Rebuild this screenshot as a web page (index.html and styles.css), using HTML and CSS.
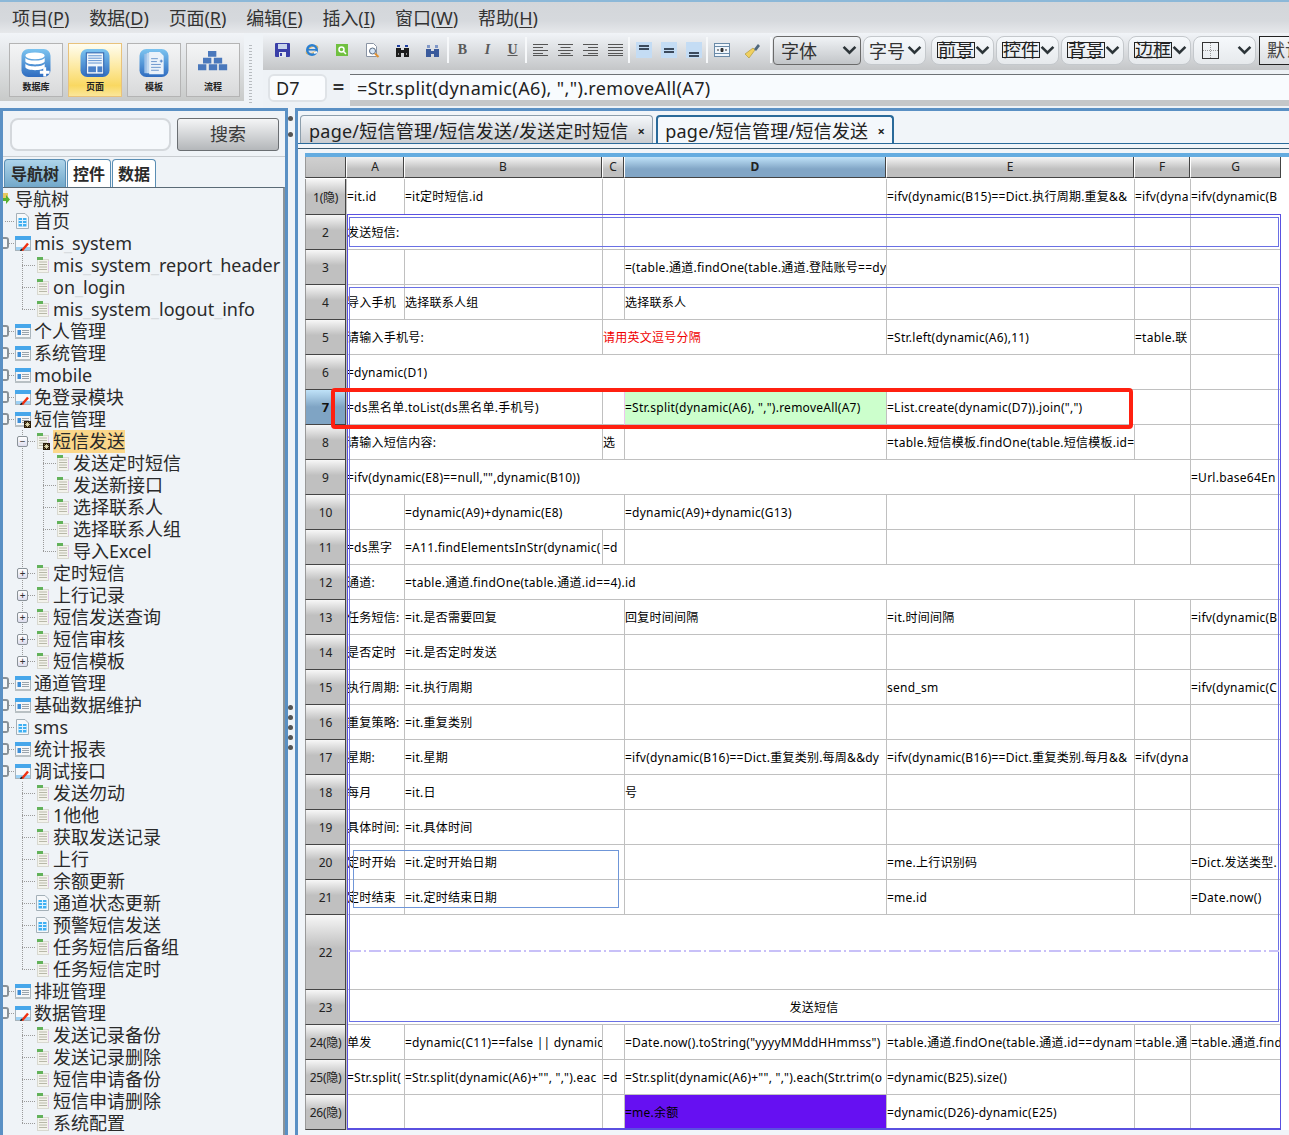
FILE: index.html
```html
<!DOCTYPE html>
<html lang="zh">
<head>
<meta charset="utf-8">
<title>页面设计</title>
<link rel="stylesheet" href="styles.css">
</head>
<body>
<svg class="defs" width="0" height="0" aria-hidden="true">
  <symbol id="page" viewBox="0 0 14 16">
    <rect x="1.5" y="2.5" width="11" height="13" fill="#f3f3ec" stroke="#d8d8d0"/>
    <rect x="1" y="0" width="6" height="3" fill="#62b25a"/>
    <path d="M3 5h8M3 7.5h8M3 10h8M3 12.5h8" stroke="#b8b8a8"/>
    <rect x="12" y="4" width="1" height="10" fill="#e0c8e8"/>
  </symbol>
  <symbol id="win" viewBox="0 0 16 15">
    <rect x=".5" y=".5" width="15" height="14" fill="#f4f6f8" stroke="#a8b4bc"/>
    <rect x="0" y="0" width="16" height="4" fill="#46a6ea"/>
    <rect x="2.5" y="6" width="3.5" height="5" fill="#3c8ed8"/>
    <path d="M7 6.5h7M7 8.5h7M7 10.5h7" stroke="#9aa4ac"/>
    <rect x="0" y="13" width="16" height="2" fill="#b8c0c4"/>
  </symbol>
  <symbol id="edit" viewBox="0 0 16 15">
    <rect x=".5" y=".5" width="15" height="14" fill="#f4f8fc" stroke="#a8b4bc"/>
    <rect x="0" y="0" width="16" height="4" fill="#46a6ea"/>
    <rect x="1" y="11" width="14" height="3" fill="#9cd0f4"/>
    <path d="M7 14.5L13 7.5" stroke="#f03010" stroke-width="2.4"/>
    <path d="M5.5 15L7 13" stroke="#202020" stroke-width="1.6"/>
  </symbol>
  <symbol id="calc" viewBox="0 0 13 16">
    <path d="M.5.5h8.500l3.500 3.500v11.500H.5z" fill="#f6f8fa" stroke="#a4b0b8"/>
    <path d="M2.500 5h8v8.500h-8z" fill="#3fb0f2"/>
    <path d="M2.500 7.500h8M2.500 10.500h8M6.500 5v8.500" stroke="#dff2ff"/>
  </symbol>
  <symbol id="star" viewBox="0 0 7 7">
    <rect width="7" height="7" fill="#2a1c08"/>
    <path d="M3.500 1v5M1 3.500h5M1.600 1.600l3.800 3.800M5.400 1.600L1.600 5.400" stroke="#f6f0c0" stroke-width=".8"/>
  </symbol>
  <symbol id="chev" viewBox="0 0 14 9">
    <path d="M1.500 1.500L7 7l5.500-5.500" fill="none" stroke="#2c3438" stroke-width="2.400"/>
  </symbol>
  <symbol id="al" viewBox="0 0 15 12">
    <path d="M0 .5h15M0 3.500h10M0 6.500h15M0 9.500h10M0 11.500h15" stroke="#555" fill="none"/>
  </symbol>
  <symbol id="ac" viewBox="0 0 15 12">
    <path d="M0 .5h15M2.500 3.500h10M0 6.500h15M2.500 9.500h10M0 11.500h15" stroke="#555" fill="none"/>
  </symbol>
  <symbol id="ar" viewBox="0 0 15 12">
    <path d="M0 .5h15M5 3.500h10M0 6.500h15M5 9.500h10M0 11.500h15" stroke="#555" fill="none"/>
  </symbol>
  <symbol id="aj" viewBox="0 0 15 12">
    <path d="M0 .5h15M0 3.500h15M0 6.500h15M0 9.500h15M0 11.500h15" stroke="#555" fill="none"/>
  </symbol>
</svg>

<header class="menubar">
  <span class="menu">项目(<u>P</u>)</span>
  <span class="menu">数据(<u>D</u>)</span>
  <span class="menu">页面(<u>R</u>)</span>
  <span class="menu">编辑(<u>E</u>)</span>
  <span class="menu">插入(<u>I</u>)</span>
  <span class="menu">窗口(<u>W</u>)</span>
  <span class="menu">帮助(<u>H</u>)</span>
</header>

<section class="tools">
  <div class="ribbon">
    <div class="rbtn">
      <svg class="ricon" viewBox="0 0 30 30">
        <defs><linearGradient id="bl" x1="0" y1="0" x2="0" y2="1"><stop offset="0" stop-color="#7cc4f0"/><stop offset="1" stop-color="#2f6cc0"/></linearGradient></defs>
        <rect width="30" height="29" rx="7" fill="url(#bl)"/>
        <ellipse cx="14" cy="7" rx="10" ry="3.500" fill="#fff"/>
        <path d="M4 9c2 4 18 4 20 0v4c-2 4-18 4-20 0zM4 15c2 4 18 4 20 0v4c-2 4-18 4-20 0z" fill="#fff"/>
        <path d="M22.500 19h3v3.500h3.500v3h-3.500v3h-3v-3H19v-3h3.500z" fill="#fff"/>
      </svg>
      <span class="rlabel">数据库</span>
    </div>
    <div class="rbtn on">
      <svg class="ricon" viewBox="0 0 30 30">
        <rect width="30" height="29" rx="7" fill="url(#bl)"/>
        <rect x="6" y="4" width="18" height="22" fill="#f0f6fc" stroke="#2a5ca8"/>
        <path d="M8 7h14M8 9.500h14M8 12h14M8 14.500h14" stroke="#5c90d0"/>
        <rect x="8" y="18" width="8" height="6" fill="#4a80c8"/>
        <rect x="17.500" y="18" width="5" height="6" fill="#4a80c8"/>
      </svg>
      <span class="rlabel">页面</span>
    </div>
    <div class="rbtn">
      <svg class="ricon" viewBox="0 0 30 30">
        <rect width="30" height="29" rx="7" fill="url(#bl)"/>
        <rect x="5" y="5" width="14" height="20" fill="#9cc0e8"/>
        <rect x="7.500" y="4" width="14" height="21" fill="#c0d8f0"/>
        <path d="M10 3h11l4 4v19H10z" fill="#eaf2fa"/>
        <path d="M12 10h7M12 13h6M12 16h10M12 19h10M12 22h8" stroke="#6c96cc"/>
        <path d="M21 12.500h3M22.500 11v3" stroke="#4a80c8"/>
      </svg>
      <span class="rlabel">模板</span>
    </div>
    <div class="rbtn">
      <svg class="ricon" viewBox="0 0 36 30">
        <path d="M12 0h10v7H12zM6 8h10v7H6zM19 8h10v7H19zM0 16h10v7H0zM13 16h10v7H13zM25 16h10v7H25z" fill="#4a78bc"/>
      </svg>
      <span class="rlabel">流程</span>
    </div>
  </div>
  <div class="grip"></div>
  <div class="barcol">
    <div class="toolbar">
      <span class="ic w30"><svg width="15" height="14" viewBox="0 0 15 14"><rect width="15" height="14" rx="1" fill="#3a3fa8"/><rect x="3" y="1" width="9" height="5" fill="#c8d4ec"/><rect x="4" y="9" width="7" height="5" fill="#e4e8f0"/><rect x="5" y="10" width="2" height="3" fill="#3a3fa8"/></svg></span>
      <span class="ic w30"><svg width="14" height="14" viewBox="0 0 14 14"><ellipse cx="7" cy="7" rx="6.500" ry="3" fill="none" stroke="#e8b040" transform="rotate(-30 7 7)"/><circle cx="7" cy="7" r="4.800" fill="none" stroke="#2b7fd0" stroke-width="2.400"/><path d="M3 6.800h8" stroke="#2b7fd0" stroke-width="1.600"/><path d="M9 10l3-1" stroke="#f4f6f8" stroke-width="2"/></svg></span>
      <span class="ic w30"><svg width="12" height="12" viewBox="0 0 12 12"><rect width="12" height="12" fill="#70c040"/><circle cx="5.500" cy="5.500" r="2.500" fill="none" stroke="#fff" stroke-width="1.500"/><path d="M7.500 7.500L10 10" stroke="#fff" stroke-width="1.500"/></svg></span>
      <span class="ic w30"><svg width="15" height="15" viewBox="0 0 15 15"><path d="M1.500.5h7l3 3v10h-10z" fill="#fff" stroke="#8a94a4"/><circle cx="7.500" cy="8" r="3" fill="#d8e8f8" stroke="#5a6a80"/><path d="M10 10.500l3.500 3.500" stroke="#e09030" stroke-width="2"/></svg></span>
      <span class="ic w30"><svg width="15" height="15" viewBox="0 0 15 15"><path d="M1 5h5v9H1zM9 5h5v9H9zM6 7h3v3H6z" fill="#1c1c1c"/><path d="M2 2h3v2H2zM10 2h3v2h-3z" fill="#2040a0"/><path d="M3 11h1M11 11h1" stroke="#fff"/></svg></span>
      <span class="ic w30"><svg width="15" height="15" viewBox="0 0 15 15"><path d="M1 6h5v8H1zM9 6h5v8H9zM6 8h3v3H6z" fill="#3a5a9c"/><path d="M2 2h3v3H2zM10 2h3v3h-3z" fill="#8098c8"/></svg></span>
      <span class="sep"></span>
      <span class="ic w25 fmt b">B</span>
      <span class="ic w25 fmt i">I</span>
      <span class="ic w25 fmt ul">U</span>
      <span class="sep"></span>
      <span class="ic w25"><svg width="15" height="12"><use href="#al"/></svg></span>
      <span class="ic w25"><svg width="15" height="12"><use href="#ac"/></svg></span>
      <span class="ic w25"><svg width="15" height="12"><use href="#ar"/></svg></span>
      <span class="ic w25"><svg width="15" height="12"><use href="#aj"/></svg></span>
      <span class="sep"></span>
      <span class="ic w25"><svg width="16" height="16" viewBox="0 0 16 16"><rect width="16" height="16" fill="#c4dcf4"/><path d="M3 3h10v2H3zM3 6h10v2H3z" fill="#3c4a5c"/></svg></span>
      <span class="ic w25"><svg width="16" height="16" viewBox="0 0 16 16"><rect width="16" height="16" fill="#c4dcf4"/><path d="M3 6h10v2H3zM3 9h10v2H3z" fill="#3c4a5c"/></svg></span>
      <span class="ic w25"><svg width="16" height="16" viewBox="0 0 16 16"><rect width="16" height="16" fill="#c4dcf4"/><path d="M3 10h10v2H3zM3 13h10v2H3z" fill="#3c4a5c"/></svg></span>
      <span class="sep"></span>
      <span class="ic w25"><svg width="16" height="14" viewBox="0 0 16 14"><rect x=".5" y=".5" width="15" height="13" fill="#f0f6fc" stroke="#6a8aa8"/><path d="M1 3.500h14M1 10.500h14" stroke="#6a8aa8"/><path d="M3 7h2M11 7h2M7 5.500h2v3H7z" fill="#333" stroke="#333"/></svg></span>
      <span class="ic w25 gap5"><svg width="17" height="15" viewBox="0 0 17 15"><path d="M10 5l-8 6 4 4 6-8z" fill="#f0d060" stroke="#a89030" stroke-width=".6"/><path d="M11 6l4-5 2 2-4 5z" fill="#50687c"/></svg></span>
      <span class="sep sep4"></span>
      <div class="sel dark w88"><span>字体</span><svg class="chev" width="15" height="10"><use href="#chev"/></svg></div>
      <div class="sel w63"><span>字号</span><svg class="chev" width="15" height="10"><use href="#chev"/></svg></div>
      <div class="sel w63 m5"><span class="swatch">前景</span><svg class="chev" width="15" height="10"><use href="#chev"/></svg></div>
      <div class="sel w63"><span class="swatch">控件</span><svg class="chev" width="15" height="10"><use href="#chev"/></svg></div>
      <div class="sel w63"><span class="swatch">背景</span><svg class="chev" width="15" height="10"><use href="#chev"/></svg></div>
      <div class="sel w63 m4"><span class="swatch">边框</span><svg class="chev" width="15" height="10"><use href="#chev"/></svg></div>
      <div class="sel w63"><span class="cellbox"></span><svg class="chev" width="15" height="10"><use href="#chev"/></svg></div>
      <div class="deflt">默认</div>
    </div>
    <div class="formula">
      <div class="cellref">D7</div>
      <div class="eq">=</div>
      <div class="finput">=Str.split(dynamic(A6), ",").removeAll(A7)</div>
    </div>
  </div>
</section>

<main class="main">
  <aside class="left">
    <div class="searchrow">
      <div class="search"></div>
      <div class="sbtn">搜索</div>
    </div>
    <div class="ltabs">
      <span class="ltab on">导航树</span>
      <span class="ltab">控件</span>
      <span class="ltab">数据</span>
    </div>
    <nav class="tree">
      <div class="row l0"><svg class="rooticon" width="7" height="14" viewBox="0 0 7 14"><rect y="1" width="5" height="6" fill="#e8c860"/><path d="M0 6h3V3l4 4.500L3 12V9H0z" fill="#58b030"/></svg><span class="label">导航树</span></div>
      <div class="row l1n"><span class="conn c10"></span><svg class="tico calc" width="13" height="16"><use href="#calc"/></svg><span class="label">首页</span></div>
      <div class="row l1"><span class="bx"></span><span class="conn c6"></span><svg class="tico" width="16" height="15"><use href="#edit"/></svg><span class="label">mis<i>_</i>system</span></div>
      <div class="row l2n v22"><span class="conn c14"></span><svg class="pico" width="14" height="16"><use href="#page"/></svg><span class="label">mis<i>_</i>system<i>_</i>report<i>_</i>header</span></div>
      <div class="row l2n v22"><span class="conn c14"></span><svg class="pico" width="14" height="16"><use href="#page"/></svg><span class="label">on<i>_</i>login</span></div>
      <div class="row l2n e22"><span class="conn c14"></span><svg class="pico" width="14" height="16"><use href="#page"/></svg><span class="label">mis<i>_</i>system<i>_</i>logout<i>_</i>info</span></div>
      <div class="row l1"><span class="bx"></span><span class="conn c6"></span><svg class="tico" width="16" height="15"><use href="#win"/></svg><span class="label">个人管理</span></div>
      <div class="row l1"><span class="bx"></span><span class="conn c6"></span><svg class="tico" width="16" height="15"><use href="#win"/></svg><span class="label">系统管理</span></div>
      <div class="row l1"><span class="bx"></span><span class="conn c6"></span><svg class="tico" width="16" height="15"><use href="#win"/></svg><span class="label">mobile</span></div>
      <div class="row l1"><span class="bx"></span><span class="conn c6"></span><svg class="tico" width="16" height="15"><use href="#edit"/></svg><span class="label">免登录模块</span></div>
      <div class="row l1"><span class="bx"></span><span class="conn c6"></span><span class="badged"><svg class="tico" width="16" height="15"><use href="#win"/></svg><svg class="badge" width="7" height="7"><use href="#star"/></svg></span><span class="label">短信管理</span></div>
      <div class="row l2b v22"><span class="bx2">−</span><span class="conn c8"></span><span class="badged"><svg class="pico" width="14" height="16"><use href="#page"/></svg><svg class="badge" width="7" height="7"><use href="#star"/></svg></span><span class="label sel-item">短信发送</span></div>
      <div class="row l3 v22 v43"><span class="conn c13"></span><svg class="pico" width="14" height="16"><use href="#page"/></svg><span class="label">发送定时短信</span></div>
      <div class="row l3 v22 v43"><span class="conn c13"></span><svg class="pico" width="14" height="16"><use href="#page"/></svg><span class="label">发送新接口</span></div>
      <div class="row l3 v22 v43"><span class="conn c13"></span><svg class="pico" width="14" height="16"><use href="#page"/></svg><span class="label">选择联系人</span></div>
      <div class="row l3 v22 v43"><span class="conn c13"></span><svg class="pico" width="14" height="16"><use href="#page"/></svg><span class="label">选择联系人组</span></div>
      <div class="row l3 v22 e43"><span class="conn c13"></span><svg class="pico" width="14" height="16"><use href="#page"/></svg><span class="label">导入Excel</span></div>
      <div class="row l2b v22"><span class="bx2">+</span><span class="conn c8"></span><svg class="pico" width="14" height="16"><use href="#page"/></svg><span class="label">定时短信</span></div>
      <div class="row l2b v22"><span class="bx2">+</span><span class="conn c8"></span><svg class="pico" width="14" height="16"><use href="#page"/></svg><span class="label">上行记录</span></div>
      <div class="row l2b v22"><span class="bx2">+</span><span class="conn c8"></span><svg class="pico" width="14" height="16"><use href="#page"/></svg><span class="label">短信发送查询</span></div>
      <div class="row l2b v22"><span class="bx2">+</span><span class="conn c8"></span><svg class="pico" width="14" height="16"><use href="#page"/></svg><span class="label">短信审核</span></div>
      <div class="row l2b e22"><span class="bx2">+</span><span class="conn c8"></span><svg class="pico" width="14" height="16"><use href="#page"/></svg><span class="label">短信模板</span></div>
      <div class="row l1"><span class="bx"></span><span class="conn c6"></span><svg class="tico" width="16" height="15"><use href="#win"/></svg><span class="label">通道管理</span></div>
      <div class="row l1"><span class="bx"></span><span class="conn c6"></span><svg class="tico" width="16" height="15"><use href="#win"/></svg><span class="label">基础数据维护</span></div>
      <div class="row l1"><span class="bx"></span><span class="conn c6"></span><svg class="tico calc" width="13" height="16"><use href="#calc"/></svg><span class="label">sms</span></div>
      <div class="row l1"><span class="bx"></span><span class="conn c6"></span><svg class="tico" width="16" height="15"><use href="#win"/></svg><span class="label">统计报表</span></div>
      <div class="row l1"><span class="bx"></span><span class="conn c6"></span><svg class="tico" width="16" height="15"><use href="#edit"/></svg><span class="label">调试接口</span></div>
      <div class="row l2n v22"><span class="conn c14"></span><svg class="pico" width="14" height="16"><use href="#page"/></svg><span class="label">发送勿动</span></div>
      <div class="row l2n v22"><span class="conn c14"></span><svg class="pico" width="14" height="16"><use href="#page"/></svg><span class="label">1他他</span></div>
      <div class="row l2n v22"><span class="conn c14"></span><svg class="pico" width="14" height="16"><use href="#page"/></svg><span class="label">获取发送记录</span></div>
      <div class="row l2n v22"><span class="conn c14"></span><svg class="pico" width="14" height="16"><use href="#page"/></svg><span class="label">上行</span></div>
      <div class="row l2n v22"><span class="conn c14"></span><svg class="pico" width="14" height="16"><use href="#page"/></svg><span class="label">余额更新</span></div>
      <div class="row l2n v22"><span class="conn c14"></span><svg class="pico calc2" width="13" height="16"><use href="#calc"/></svg><span class="label">通道状态更新</span></div>
      <div class="row l2n v22"><span class="conn c14"></span><svg class="pico calc2" width="13" height="16"><use href="#calc"/></svg><span class="label">预警短信发送</span></div>
      <div class="row l2n v22"><span class="conn c14"></span><svg class="pico" width="14" height="16"><use href="#page"/></svg><span class="label">任务短信后备组</span></div>
      <div class="row l2n e22"><span class="conn c14"></span><svg class="pico" width="14" height="16"><use href="#page"/></svg><span class="label">任务短信定时</span></div>
      <div class="row l1"><span class="bx"></span><span class="conn c6"></span><svg class="tico" width="16" height="15"><use href="#win"/></svg><span class="label">排班管理</span></div>
      <div class="row l1"><span class="bx"></span><span class="conn c6"></span><svg class="tico" width="16" height="15"><use href="#edit"/></svg><span class="label">数据管理</span></div>
      <div class="row l2n v22"><span class="conn c14"></span><svg class="pico" width="14" height="16"><use href="#page"/></svg><span class="label">发送记录备份</span></div>
      <div class="row l2n v22"><span class="conn c14"></span><svg class="pico" width="14" height="16"><use href="#page"/></svg><span class="label">发送记录删除</span></div>
      <div class="row l2n v22"><span class="conn c14"></span><svg class="pico" width="14" height="16"><use href="#page"/></svg><span class="label">短信申请备份</span></div>
      <div class="row l2n v22"><span class="conn c14"></span><svg class="pico" width="14" height="16"><use href="#page"/></svg><span class="label">短信申请删除</span></div>
      <div class="row l2n e22"><span class="conn c14"></span><svg class="pico" width="14" height="16"><use href="#page"/></svg><span class="label">系统配置</span></div>
    </nav>
  </aside>

  <div class="splitter">
    <div class="dots top"><b></b><b></b></div>
    <div class="dots"><b></b><b></b><b></b><b></b><b></b></div>
  </div>

  <section class="right">
    <div class="tabs">
      <div class="tab">page/短信管理/短信发送/发送定时短信<span class="x">×</span></div>
      <div class="tab on">page/短信管理/短信发送<span class="x">×</span></div>
    </div>
    <div class="sheetwrap">
      <div class="sheet">
        <div class="corner hd"></div><div class="hd">A</div><div class="hd">B</div><div class="hd">C</div><div class="hd act">D</div><div class="hd">E</div><div class="hd">F</div><div class="hd">G</div>

        <div class="rh sm">1(隐)</div><div class="c">=it.id</div><div class="c">=it定时短信.id</div><div class="c"></div><div class="c"></div><div class="c">=ifv(dynamic(B15)==Dict.执行周期.重复&amp;&amp;</div><div class="c">=ifv(dyna</div><div class="c">=ifv(dynamic(B</div>

        <div class="rh">2</div><div class="c s2">发送短信:</div><div class="c"></div><div class="c"></div><div class="c"></div><div class="c"></div><div class="c"></div>

        <div class="rh">3</div><div class="c"></div><div class="c"></div><div class="c"></div><div class="c">=(table.通道.findOne(table.通道.登陆账号==dy</div><div class="c"></div><div class="c"></div><div class="c"></div>

        <div class="rh">4</div><div class="c">导入手机</div><div class="c">选择联系人组</div><div class="c"></div><div class="c">选择联系人</div><div class="c"></div><div class="c"></div><div class="c"></div>

        <div class="rh">5</div><div class="c s2">请输入手机号:</div><div class="c s2 red">请用英文逗号分隔</div><div class="c">=Str.left(dynamic(A6),11)</div><div class="c">=table.联</div><div class="c"></div>

        <div class="rh">6</div><div class="c s6">=dynamic(D1)</div><div class="c"></div>

        <div class="rh act">7</div><div class="c s2">=ds黑名单.toList(ds黑名单.手机号)</div><div class="c"></div><div class="c green">=Str.split(dynamic(A6), ",").removeAll(A7)</div><div class="c s2">=List.create(dynamic(D7)).join(",")</div><div class="c"></div>

        <div class="rh">8</div><div class="c s2">请输入短信内容:</div><div class="c">选</div><div class="c"></div><div class="c">=table.短信模板.findOne(table.短信模板.id=</div><div class="c"></div><div class="c"></div>

        <div class="rh">9</div><div class="c s6">=ifv(dynamic(E8)==null,"",dynamic(B10))</div><div class="c">=Url.base64En</div>

        <div class="rh">10</div><div class="c"></div><div class="c s2">=dynamic(A9)+dynamic(E8)</div><div class="c">=dynamic(A9)+dynamic(G13)</div><div class="c"></div><div class="c"></div><div class="c"></div>

        <div class="rh">11</div><div class="c">=ds黑字</div><div class="c">=A11.findElementsInStr(dynamic(</div><div class="c">=d</div><div class="c"></div><div class="c"></div><div class="c"></div><div class="c"></div>

        <div class="rh">12</div><div class="c">通道:</div><div class="c s6">=table.通道.findOne(table.通道.id==4).id</div>

        <div class="rh">13</div><div class="c">任务短信:</div><div class="c s2">=it.是否需要回复</div><div class="c">回复时间间隔</div><div class="c">=it.时间间隔</div><div class="c"></div><div class="c">=ifv(dynamic(B</div>

        <div class="rh">14</div><div class="c">是否定时</div><div class="c s2">=it.是否定时发送</div><div class="c"></div><div class="c"></div><div class="c"></div><div class="c"></div>

        <div class="rh">15</div><div class="c">执行周期:</div><div class="c s2">=it.执行周期</div><div class="c"></div><div class="c">send_sm</div><div class="c"></div><div class="c">=ifv(dynamic(C</div>

        <div class="rh">16</div><div class="c">重复策略:</div><div class="c s2">=it.重复类别</div><div class="c"></div><div class="c"></div><div class="c"></div><div class="c"></div>

        <div class="rh">17</div><div class="c">星期:</div><div class="c s2">=it.星期</div><div class="c">=ifv(dynamic(B16)==Dict.重复类别.每周&amp;&amp;dy</div><div class="c">=ifv(dynamic(B16)==Dict.重复类别.每月&amp;&amp;</div><div class="c">=ifv(dyna</div><div class="c"></div>

        <div class="rh">18</div><div class="c">每月</div><div class="c s2">=it.日</div><div class="c">号</div><div class="c"></div><div class="c"></div><div class="c"></div>

        <div class="rh">19</div><div class="c">具体时间:</div><div class="c s2">=it.具体时间</div><div class="c"></div><div class="c"></div><div class="c"></div><div class="c"></div>

        <div class="rh">20</div><div class="c">定时开始</div><div class="c s2">=it.定时开始日期</div><div class="c"></div><div class="c">=me.上行识别码</div><div class="c"></div><div class="c">=Dict.发送类型.</div>

        <div class="rh">21</div><div class="c">定时结束</div><div class="c s2">=it.定时结束日期</div><div class="c"></div><div class="c">=me.id</div><div class="c"></div><div class="c">=Date.now()</div>

        <div class="rh">22</div><div class="c s7"></div>

        <div class="rh">23</div><div class="c s7 ctr">发送短信</div>

        <div class="rh sm">24(隐)</div><div class="c">单发</div><div class="c">=dynamic(C11)==false || dynamic</div><div class="c"></div><div class="c">=Date.now().toString("yyyyMMddHHmmss")</div><div class="c">=table.通道.findOne(table.通道.id==dynam</div><div class="c">=table.通</div><div class="c">=table.通道.find</div>

        <div class="rh sm">25(隐)</div><div class="c">=Str.split(</div><div class="c">=Str.split(dynamic(A6)+"", ",").eac</div><div class="c">=d</div><div class="c">=Str.split(dynamic(A6)+"", ",").each(Str.trim(o</div><div class="c">=dynamic(B25).size()</div><div class="c"></div><div class="c"></div>

        <div class="rh sm">26(隐)</div><div class="c"></div><div class="c"></div><div class="c"></div><div class="c purple">=me.余额</div><div class="c">=dynamic(D26)-dynamic(E25)</div><div class="c"></div><div class="c"></div>

        <div class="ov outer"></div>
        <div class="ov in1"></div>
        <div class="ov in2"></div>
        <div class="ov box3"></div>
        <div class="ov dash"></div>
        <div class="ov redbox"></div>
      </div>
    </div>
  </section>
</main>
</body>
</html>
```

FILE: styles.css
```css
* { box-sizing: border-box; }
html, body { margin: 0; padding: 0; }
body {
  width: 1289px;
  height: 1135px;
  overflow: hidden;
  background: #eff3f7;
  color: #222;
  font-family: "Noto Sans", "Noto Sans CJK SC", sans-serif;
  display: flex;
  flex-direction: column;
}
.defs { position: absolute; }

/* menu */
.menubar {
  height: 33px;
  flex: none;
  border-top: 2px solid #8cb8d8;
  background: linear-gradient(#d3d6da 0, #d6d9dd 60%, #e6e8eb 100%);
  display: flex;
  align-items: center;
  padding-left: 12px;
  gap: 20px;
  font-size: 18px;
  line-height: 24px;
  color: #333;
}
.menu { white-space: nowrap; letter-spacing: -.1px; }
.menu u { text-underline-offset: 2px; }

/* tools */
.tools { height: 75px; flex: none; display: flex; }
.ribbon {
  width: 244px;
  height: 68px;
  padding: 10px 0 0 9px;
  display: flex;
  gap: 5px;
  background: linear-gradient(#f1f4f8, #c8cac9);
}
.rbtn {
  width: 54px;
  height: 54px;
  border: 1px solid #b4b4b4;
  background: linear-gradient(#f4f5f6, #d8d9da);
  display: flex;
  flex-direction: column;
  align-items: center;
  padding-top: 5px;
}
.rbtn.on { border-color: #e8c27c; background: linear-gradient(#fffdf0, #fde9a0 45%, #f9d862 80%, #fbe79a); }
.ricon { width: 30px; height: 29px; flex: none; }
.rlabel { font-size: 9px; line-height: 13px; font-weight: 700; color: #222; margin-top: 2px; white-space: nowrap; }
.grip {
  width: 19px;
  height: 60px;
  margin-top: 12px;
  background: repeating-linear-gradient(#b8bcc0 0 1px, transparent 1px 3px) 5px 0 / 3px 100% no-repeat;
}
.barcol { flex: 1; min-width: 0; display: flex; flex-direction: column; }
.toolbar {
  height: 37px;
  flex: none;
  display: flex;
  align-items: center;
  padding: 2px 0 5px 4px;
  background: linear-gradient(#f1f4f8, #c4c6c8);
  overflow: hidden;
}
.ic { display: flex; justify-content: center; align-items: center; flex: none; height: 24px; }
.w30 { width: 30px; }
.w25 { width: 25px; }
.gap5 { margin-left: 5px; }
.sep { width: 2px; height: 26px; flex: none; margin-right: 1px; background: #f6f8fa; }
.sep.sep4 { margin-left: 6px; }
.fmt { font-family: "Liberation Serif", serif; font-size: 14px; color: #5a5a5a; font-weight: 700; }
.fmt.i { font-style: italic; }
.fmt.ul { text-decoration: underline; }
.sel {
  height: 29px;
  flex: none;
  display: flex;
  align-items: center;
  justify-content: space-between;
  margin-right: 2px;
  padding: 0 3px 0 5px;
  border: 1px solid #c4c8cc;
  border-radius: 8px;
  background: linear-gradient(#f6f9fc, #e6e9ec);
  font-size: 18px;
  color: #333;
}
.sel.dark { border: 1px solid #6a6a6a; border-radius: 4px; background: linear-gradient(#f0f3f6, #c2c5c8); padding-left: 7px; }
.chev { flex: none; }
.w88 { width: 88px; }
.w63 { width: 63px; }
.m5 { margin-left: 3px; }
.m4 { margin-left: 2px; }
.swatch {
  display: block;
  height: 16px;
  line-height: 15px;
  border: 1px solid #222;
  color: #222;
  font-size: 18px;
  white-space: nowrap;
  overflow: visible;
}
.cellbox {
  width: 17px;
  height: 17px;
  margin-left: 3px;
  border: 1px solid #333;
  background:
    repeating-linear-gradient(#999 0 1px, transparent 1px 2px) center / 1px 100% no-repeat,
    repeating-linear-gradient(90deg, #999 0 1px, transparent 1px 2px) center / 100% 1px no-repeat;
}
.deflt {
  width: 60px;
  height: 29px;
  flex: none;
  margin-left: 1px;
  padding-left: 7px;
  border: 1px solid #222;
  background: linear-gradient(#f6f8fa, #dcdfe2);
  font-size: 18px;
  line-height: 27px;
  color: #444;
  white-space: nowrap;
}
.formula { flex: 1; display: flex; background: #eef2f6; padding-top: 4px; align-items: flex-start; }
.cellref {
  width: 59px;
  height: 28px;
  margin-left: 5px;
  padding-left: 6px;
  border: 2px solid #dfe3e7;
  border-radius: 6px;
  background: #fafcfe;
  font-size: 18px;
  line-height: 24px;
  color: #222;
}
.eq { width: 23px; text-align: center; font-size: 20px; line-height: 26px; font-weight: 700; color: #333; }
.finput {
  flex: 1;
  height: 32px;
  padding-left: 7px;
  border-top: 1px solid #6e7276;
  border-bottom: 6px solid #c5c7c9;
  background: #f8fbfe;
  font-size: 18px;
  line-height: 26px;
  letter-spacing: .38px;
  color: #222;
  white-space: nowrap;
}

/* main */
.main { flex: 1; min-height: 0; display: flex; }
.left {
  width: 288px;
  flex: none;
  border: solid #5a90c4;
  border-width: 3px 3px 0;
  background: #eff3f7;
  display: flex;
  flex-direction: column;
  overflow: hidden;
}
.searchrow {
  height: 46px;
  flex: none;
  display: flex;
  padding: 7px 0 0 7px;
  gap: 6px;
  border-bottom: 1px solid #c8ccd0;
}
.search { width: 161px; height: 33px; border: 2px solid #d4d8dc; border-radius: 8px; background: #f6f9fc; }
.sbtn {
  width: 102px;
  height: 33px;
  border: 1px solid #6a6e72;
  border-radius: 3px;
  background: linear-gradient(#f4f5f6, #b4b7ba);
  text-align: center;
  font-size: 18px;
  line-height: 31px;
  color: #3a3a3a;
}
.ltabs { height: 30px; flex: none; display: flex; gap: 1px; padding: 2px 0 0 1px; }
.ltab {
  padding: 0 5px;
  height: 28px;
  border: 1px solid #5a8eb4;
  border-bottom: 0;
  border-radius: 4px 4px 0 0;
  background: #fff;
  font-size: 16px;
  line-height: 29px;
  font-weight: 700;
  color: #2a2a2a;
}
.ltab.on { width: 62px; padding: 0 0 0 6px; background: linear-gradient(#aed4ea, #72a8ca); }
.tree {
  flex: 1;
  min-height: 0;
  border-top: 1px solid #5a6a76;
  border-right: 2px solid #8a9298;
  overflow: hidden;
  --dot: repeating-linear-gradient(#9a9a9a 0 1px, transparent 1px 2px);
}
.row { height: 22px; display: flex; align-items: center; white-space: nowrap; background-repeat: no-repeat; }
.v22 { background-image: var(--dot); background-size: 1px 22px; background-position: 19px 0; }
.e22 { background-image: var(--dot); background-size: 1px 11px; background-position: 19px 0; }
.v22.v43 { background-image: var(--dot), var(--dot); background-size: 1px 22px, 1px 22px; background-position: 19px 0, 40px 0; }
.v22.e43 { background-image: var(--dot), var(--dot); background-size: 1px 22px, 1px 11px; background-position: 19px 0, 40px 0; }
.l0 { padding-left: 0; }
.rooticon { margin-right: 5px; flex: none; }
.l1n { padding-left: 2px; }
.l1 { padding-left: 0; }
.l2n { padding-left: 19px; }
.l2b { padding-left: 14px; }
.l3 { padding-left: 40px; }
.bx {
  width: 6px;
  height: 12px;
  flex: none;
  border: 2px solid #8a9298;
  border-left: 0;
  border-radius: 0 3px 3px 0;
  background: #f4f6f8;
}
.bx2 {
  width: 11px;
  height: 11px;
  flex: none;
  border: 1px solid #8a9298;
  border-radius: 2px;
  background: linear-gradient(#fff, #dde);
  font-size: 10px;
  line-height: 9px;
  text-align: center;
  color: #333;
}
.conn {
  height: 1px;
  flex: none;
  background: repeating-linear-gradient(90deg, #9a9a9a 0 1px, transparent 1px 2px);
}
.c6 { width: 6px; }
.c8 { width: 8px; }
.c10 { width: 10px; }
.c13 { width: 13px; }
.c14 { width: 14px; }
.tico { flex: none; margin-right: 3px; }
.tico.calc { margin-left: 1px; margin-right: 5px; }
.pico { flex: none; margin-right: 3px; }
.pico.calc2 { margin-right: 4px; }
.badged { display: block; position: relative; line-height: 0; flex: none; }
.badge { position: absolute; right: 3px; bottom: -1px; }
.label { font-size: 18px; line-height: 22px; color: #2a2a2a; }
.label i { font-style: normal; color: #d8dce0; }
.sel-item { background: #fbd78a; height: 23px; }

/* splitter */
.splitter {
  width: 7px;
  flex: none;
  display: flex;
  flex-direction: column;
  background: #eff3f7;
  align-items: center;
  padding-top: 8px;
}
.dots { display: flex; flex-direction: column; gap: 5px; margin-left: -2px; }
.dots.top { gap: 11px; margin-bottom: 568px; }
.dots b { width: 5px; height: 5px; border-radius: 50%; background: #555; display: block; }

/* right */
.right {
  flex: 1;
  min-width: 0;
  border: solid #5a90c4;
  border-width: 3px 0 0 3px;
  display: flex;
  flex-direction: column;
  background: #f1f5f9;
}
.tabs {
  height: 33px;
  flex: none;
  display: flex;
  align-items: flex-end;
  gap: 3px;
  padding-left: 2px;
  border-bottom: 1px solid #2a6a9a;
}
.tab {
  height: 28px;
  padding: 2px 7px 0 8px;
  display: flex;
  align-items: center;
  border: 1px solid #8c9eac;
  border-bottom: 0;
  border-radius: 4px 4px 0 0;
  background: linear-gradient(#f5f8fb, #c9ccd0);
  font-size: 18px;
  line-height: 26px;
  letter-spacing: .24px;
  color: #222;
  white-space: nowrap;
}
.tab.on { border: 2px solid #2a6a9a; border-bottom: 0; background: #f4f8fc; padding-left: 7px; }
.x { margin-left: 9px; font-size: 13px; font-weight: 700; color: #222; line-height: 10px; }
.sheetwrap {
  flex: 1;
  min-height: 0;
  margin-top: 4px;
  border-top: 1px solid #3a5a70;
  padding: 8px 0 0 7px;
}
.sheet {
  position: relative;
  display: grid;
  grid-template-columns: 41px 58px 198px 22px 262px 248px 56px 91px;
  grid-template-rows: 22px 36px repeat(20, 35px) 75px repeat(4, 35px);
  width: 984px;
  background: #fff;
  box-shadow: 0 -4px 0 #64ace0;
  font-size: 12px;
  color: #000;
}
.hd {
  height: 21px;
  border-right: 1px solid #444;
  border-bottom: 1px solid #444;
  border-left: 1px solid #fff;
  background: linear-gradient(#f5f5f5, #bfbfbf 60%);
  text-align: center;
  line-height: 20px;
  font-size: 12px;
  color: #222;
}
.hd.corner { border-left: 1px solid #999; background: linear-gradient(#d0d0d0, #bfbfbf); }
.hd.act { background: linear-gradient(#bfe2f8, #82a6c6 60%); font-weight: 700; }
.rh {
  border-left: 1px solid #999;
  border-right: 1px solid #444;
  border-bottom: 1px solid #444;
  background: linear-gradient(#f7f7f7, #c0c0c0 45%);
  display: flex;
  align-items: center;
  justify-content: center;
  font-size: 12px;
  color: #222;
  white-space: nowrap;
}
.rh.sm { letter-spacing: -.3px; }
.rh.act { background: linear-gradient(#bfe2f8, #7fa4c4 50%); font-weight: 700; color: #111; font-size: 13px; }
.c {
  border-left: 1px solid #c0c0c0;
  border-bottom: 1px solid #c0c0c0;
  display: flex;
  align-items: center;
  overflow: hidden;
  white-space: nowrap;
  line-height: 17px;
  letter-spacing: .25px;
  min-width: 0;
}
.s2 { grid-column: span 2; }
.s6 { grid-column: span 6; }
.s7 { grid-column: span 7; }
.ctr { justify-content: center; }
.red { color: #f00000; }
.green { background: #ccffcc; border-left-color: #f0c4f0; }
.purple { background: #6610f2; }

/* overlays */
.ov { position: absolute; pointer-events: none; }
.outer { left: 42px; top: 57px; width: 934px; height: 916px; border: 1px solid #5a50e0; border-width: 1px 1px 2px 1px; }
.in1 { left: 44px; top: 60px; width: 930px; height: 30px; border: 1px solid #6a70e4; }
.in2 { left: 44px; top: 130px; width: 930px; height: 735px; border: 1px solid #6a70e4; }
.box3 { left: 48px; top: 693px; width: 266px; height: 58px; border: 1px solid #6f96d8; }
.dash {
  left: 44px;
  top: 793px;
  width: 930px;
  height: 2px;
  background: repeating-linear-gradient(90deg, #c8c0f8 0 12px, transparent 12px 15px, #c8c0f8 15px 17px, transparent 17px 20px);
}
.redbox { left: 26px; top: 231px; width: 802px; height: 41px; border: 4px solid #ff2010; border-radius: 4px; }
```
